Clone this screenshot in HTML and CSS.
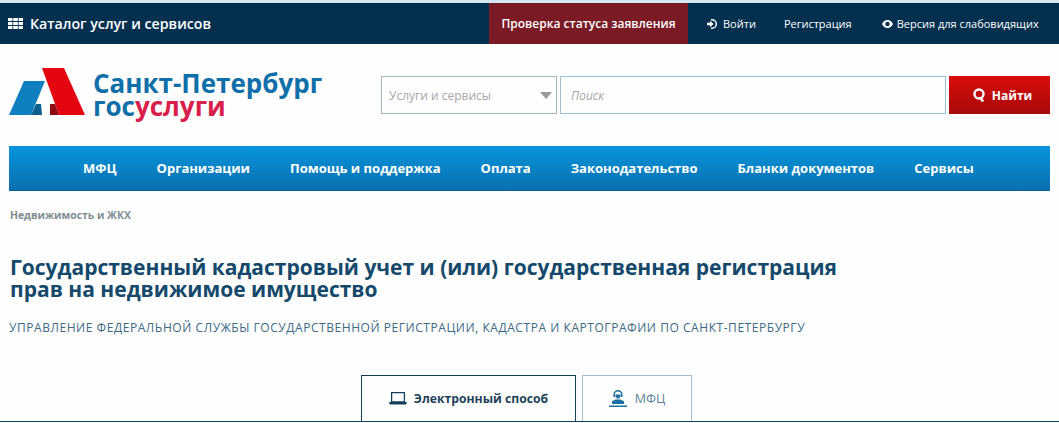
FILE: index.html
```html
<!DOCTYPE html>
<html lang="ru">
<head>
    <meta charset="UTF-8">
    <title>Санкт-Петербург госуслуги</title>
    <link rel="stylesheet" href="styles.css">
</head>
<body>

<div class="topbar">
    <a class="catalog">
        <svg class="grid-icon" width="15" height="11" viewBox="0 0 15 11"><path fill="#fff" d="M0 0h4.400v3H0zM5.200 0h4.600v3H5.200zM10.600 0H15v3h-4.400zM0 4h4.400v3H0zM5.200 4h4.600v3H5.200zM10.600 4H15v3h-4.400zM0 8h4.400v3H0zM5.200 8h4.600v3H5.200zM10.600 8H15v3h-4.400z"/></svg>
        Каталог услуг и сервисов
    </a>
    <a class="status-link">Проверка статуса заявления</a>
    <a class="top-link login">
        <svg width="10" height="10" viewBox="0 0 10 10"><path fill="#fff" d="M5 0a5 5 0 1 1 0 10H4V8.600h1a3.600 3.600 0 0 0 0-7.200H4V0zM0 3.800h3V1.800L6.600 5 3 8.200V6.200H0z"/></svg>
        Войти
    </a>
    <a class="top-link register">Регистрация</a>
    <a class="top-link eye">
        <svg width="11" height="8" viewBox="0 0 11 8"><path fill="#fff" fill-rule="evenodd" d="M5.500 0C8 0 10 1.800 11 4 10 6.200 8 8 5.500 8S1 6.200 0 4C1 1.800 3 0 5.500 0zm0 1.800a2.200 2.200 0 1 0 0 4.400 2.200 2.200 0 0 0 0-4.400z"/></svg>
        Версия для слабовидящих
    </a>
</div>

<div class="header">
    <div class="logo">
        <svg width="78" height="48" viewBox="0 0 78 48">
            <path fill="#0f7fc0" d="M1 47 16 13H37L23 47z"/>
            <path fill="#0c5f8f" d="M28 36h5l1 11H23z"/>
            <path fill="#e30611" d="M34 0H56L77 47H51z"/>
            <path fill="#8d0c12" d="M42 36h5l4 11H42z"/>
        </svg>
        <div class="logo-text">
            <div class="logo-city">Санкт-Петербург</div>
            <div class="logo-gos">гос<span class="logo-red">услуги</span></div>
        </div>
    </div>
    <form class="search">
        <div class="search-select">
            Услуги и сервисы
            <span class="select-arrow"></span>
        </div>
        <div class="search-input">Поиск</div>
        <button class="search-btn" type="button">
            <svg width="12" height="14" viewBox="0 0 12 14"><circle cx="6" cy="6" r="4.500" fill="none" stroke="#fff" stroke-width="2.400"/><path d="M7.500 10l2.600 3.500" stroke="#fff" stroke-width="2.600"/></svg>
            Найти
        </button>
    </form>
</div>

<div class="nav">
    <a>МФЦ</a>
    <a>Организации</a>
    <a>Помощь и поддержка</a>
    <a>Оплата</a>
    <a>Законодательство</a>
    <a>Бланки документов</a>
    <a>Сервисы</a>
</div>

<div class="breadcrumb">Недвижимость и ЖКХ</div>

<h1 class="title">Государственный кадастровый учет и (или) государственная регистрация<br>прав на недвижимое имущество</h1>

<div class="agency">Управление Федеральной службы государственной регистрации, кадастра и картографии по Санкт-Петербургу</div>

<div class="tabs">
    <a class="tab active">
        <svg width="18" height="13" viewBox="0 0 18 13"><path fill="none" stroke="#123f5c" stroke-width="1.300" d="M2.600.7h12.800v9.300H2.600z"/><path fill="#123f5c" d="M0 10h18l-1 2.500H1z"/></svg>
        Электронный способ
    </a>
    <a class="tab">
        <svg width="18" height="17" viewBox="0 0 18 17"><path fill="none" stroke="#1b6f9e" stroke-width="1.500" d="M5.200 7V4.500a3.800 3.800 0 0 1 7.600 0V7"/><path fill="#1b6f9e" d="M6.500 4.500h5v2.800h-1v1.200h-3V7.300h-1zM3 14v-2.800L6.500 9.500h5l3.500 1.700V14zM0 15.500h18V17H0z"/></svg>
        МФЦ
    </a>
</div>

</body>
</html>
```

FILE: styles.css
```css
body {
    font-family: "Open Sans", sans-serif;
    margin: 0;
    padding: 0;
    background-color: #fefefe;
    height: 423px;
    overflow: hidden;
}
a {
    display: flex;
    align-items: center;
    white-space: nowrap;
}
.topbar {
    display: flex;
    align-items: stretch;
    height: 41px;
    background-color: #04304f;
    border-top: 3px solid #d5e6f0;
    color: white;
}
.catalog {
    width: 489px;
    flex: none;
    box-sizing: border-box;
    padding-left: 8px;
    font-size: 14.2px;
    font-weight: 600;
}
.grid-icon {
    margin-right: 7px;
}
.status-link {
    width: 199px;
    flex: none;
    justify-content: center;
    background-color: #7a1a24;
    font-size: 12px;
    font-weight: 600;
}
.top-link {
    font-size: 11px;
}
.login {
    margin-left: 19px;
}
.login svg {
    margin-right: 6px;
}
.register {
    margin-left: 28px;
}
.eye {
    margin-left: 30px;
}
.eye svg {
    margin-right: 4px;
}
.header {
    display: flex;
    align-items: flex-start;
    height: 102px;
}
.logo {
    display: flex;
    width: 373px;
    flex: none;
    margin: 24px 0 0 8px;
}
.logo-text {
    margin-left: 7px;
    font-weight: 700;
    color: #0f6fa8;
}
.logo-city {
    font-size: 26px;
    line-height: 25px;
    margin-top: 3px;
}
.logo-gos {
    font-size: 26px;
    line-height: 20px;
}
.logo-red {
    color: #d8204a;
}
.search {
    display: flex;
    margin-top: 32px;
    height: 38px;
}
.search-select {
    display: flex;
    align-items: center;
    justify-content: space-between;
    box-sizing: border-box;
    width: 176px;
    padding: 0 2px 0 7px;
    border: 1px solid #9fb9c6;
    font-size: 12px;
    color: #a6a6a6;
}
.select-arrow {
    width: 0;
    height: 0;
    margin-right: 2px;
    border-left: 6px solid transparent;
    border-right: 6px solid transparent;
    border-top: 7px solid #9a9a9a;
}
.search-input {
    display: flex;
    align-items: center;
    box-sizing: border-box;
    width: 386px;
    margin-left: 3px;
    padding-left: 10px;
    border: 1px solid #9cc3d6;
    font-size: 12px;
    font-style: italic;
    color: #a6a6a6;
}
.search-btn {
    display: flex;
    align-items: center;
    justify-content: center;
    gap: 7px;
    box-sizing: border-box;
    width: 101px;
    margin-left: 3px;
    padding: 0 0 0 6px;
    border: none;
    background: linear-gradient(#d80c0c, #a80a0a);
    color: white;
    font-family: inherit;
    font-size: 12px;
    font-weight: 700;
}
.nav {
    display: flex;
    align-items: center;
    gap: 40px;
    box-sizing: border-box;
    height: 45px;
    margin: 0 9px;
    padding-left: 74px;
    background: linear-gradient(#0795dc, #0a6fae);
    border-bottom: 1px solid #0b5f95;
    color: white;
    font-size: 13px;
    font-weight: 700;
}
.breadcrumb {
    margin: 17px 0 0 10px;
    font-size: 10.4px;
    line-height: 14px;
    font-weight: 700;
    color: #7f8c92;
}
.title {
    margin: 34px 0 0 10px;
    font-size: 21px;
    line-height: 22px;
    font-weight: 700;
    color: #14496b;
}
.agency {
    margin: 20px 0 0 9px;
    font-size: 12px;
    line-height: 16px;
    text-transform: uppercase;
    letter-spacing: 0.55px;
    color: #3d6a85;
}
.tabs {
    display: flex;
    gap: 6px;
    height: 47px;
    margin-top: 39px;
    padding-left: 361px;
    border-bottom: 1px solid #123f5c;
    box-sizing: border-box;
}
.tab {
    justify-content: center;
    gap: 8px;
    box-sizing: border-box;
    width: 110px;
    height: 46px;
    border: 1px solid #9fc0d0;
    border-bottom: none;
    font-size: 12.5px;
    color: #5d8197;
}
.tab.active {
    width: 215px;
    gap: 7px;
    border: 1px solid #123f5c;
    border-bottom: none;
    font-size: 12.2px;
    font-weight: 700;
    color: #1e4257;
}
```
